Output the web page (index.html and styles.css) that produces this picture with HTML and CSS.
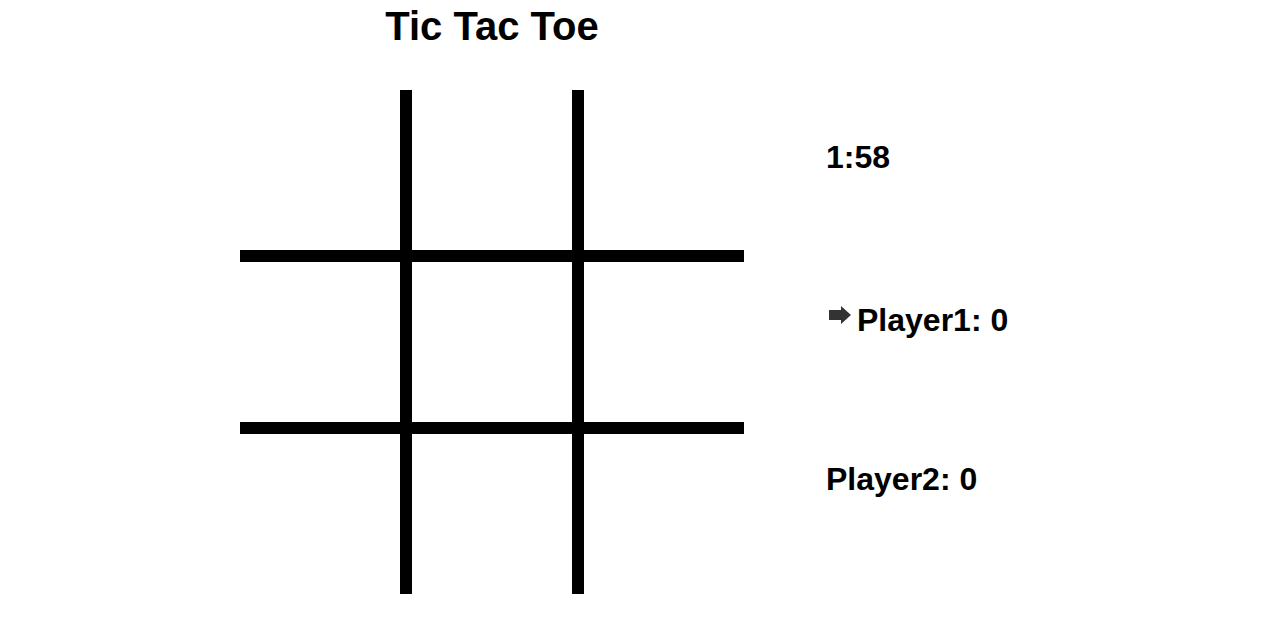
FILE: index.html
```html
<!DOCTYPE html>
<html lang="en">
<head>
    <meta charset="UTF-8">
    <meta name="viewport" content="width=device-width, initial-scale=1.0">
    <title>Tic Tac Toe</title>
    <link rel="stylesheet" href="styles.css">
</head>
<body>
    <div class="game">
        <div class="board-column">
            <h1 class="title">Tic Tac Toe</h1>
            <div class="board">
                <div class="cell"></div>
                <div class="cell"></div>
                <div class="cell"></div>
                <div class="cell"></div>
                <div class="cell"></div>
                <div class="cell"></div>
                <div class="cell"></div>
                <div class="cell"></div>
                <div class="cell"></div>
            </div>
        </div>
        <div class="side">
            <div class="info" id="timer">1:58</div>
            <div class="info player active">
                <svg class="turn-arrow" width="24" height="24" viewBox="0 0 24 24">
                    <path d="M1 5H13V1L23 10L13 19V15H1Z" fill="#333"/>
                </svg>
                <span>Player1: 0</span>
            </div>
            <div class="info player">
                <span>Player2: 0</span>
            </div>
        </div>
    </div>
</body>
</html>
```

FILE: styles.css
```css
body {
    margin: 0;
    font-family: "Liberation Sans", Arial, sans-serif;
    background-color: #fff;
    color: #000;
}

.game {
    display: flex;
    padding-left: 240px;
}

.board-column {
    width: 504px;
}

.title {
    margin: 0 0 40px;
    padding-top: 2px;
    font-size: 40px;
    line-height: 48px;
    text-align: center;
}

.board {
    display: grid;
    grid-template-columns: repeat(3, 160px);
    grid-template-rows: repeat(3, 160px);
    gap: 12px;
    background-color: #000;
}

.cell {
    background-color: #fff;
}

.side {
    margin-left: 80px;
    padding-top: 137px;
    display: flex;
    flex-direction: column;
}

.info {
    font-size: 32px;
    font-weight: bold;
    line-height: 40px;
    height: 40px;
    padding-left: 2px;
}

.player {
    display: flex;
    align-items: center;
}

.active {
    margin-top: 123px;
}

.active + .player {
    margin-top: 119px;
}

.turn-arrow {
    margin: -6px 5px 0 2px;
}
```
